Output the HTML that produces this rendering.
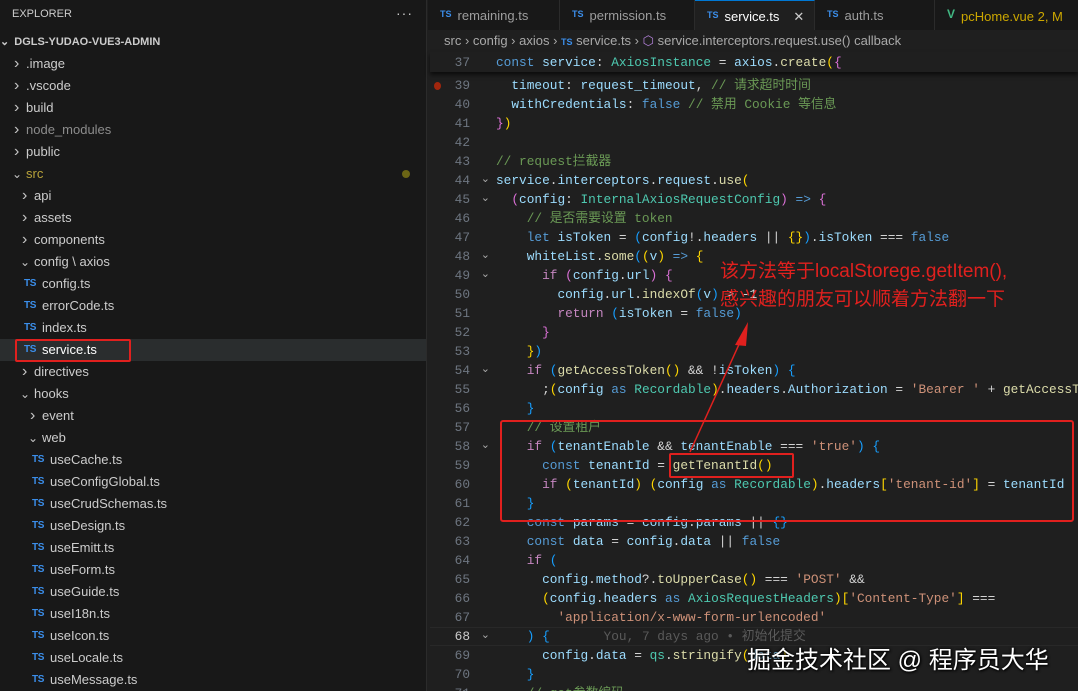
<!DOCTYPE html>
<html><head><meta charset="utf-8"><style>
*{margin:0;padding:0;box-sizing:border-box}
html,body{width:1078px;height:691px;overflow:hidden}
body{background:#1f1f1f;position:relative;font-family:"Liberation Sans","Noto Sans CJK SC",sans-serif;color:#ccc}
#side{position:absolute;left:0;top:0;width:427px;height:691px;background:#181818;border-right:1px solid #2b2b2b}
.it{position:absolute;height:22px;line-height:22px;font-size:13px;color:#ccc;white-space:nowrap}
.chev{position:absolute;top:0;font-size:12px;color:#c5c5c5}
.ts{position:absolute;top:0;font-size:10px;font-weight:bold;color:#3b8eea;letter-spacing:-.3px}
#tabs{position:absolute;left:428px;top:0;width:650px;height:30px;background:#181818}
.tab{position:absolute;top:0;height:30px;line-height:29px;font-size:13px;color:#9d9d9d;border-right:1px solid #2b2b2b;padding-left:12px;white-space:nowrap}
.tab b{font-size:9px;color:#3b8eea;margin-right:6px;vertical-align:3px}
#bc{position:absolute;left:444px;top:33px;font-size:13px;color:#a9a9a9;white-space:nowrap}
.code{position:absolute;left:496px;font-family:"Liberation Mono","Noto Sans CJK SC",monospace;font-size:12.8px;white-space:pre;color:#9cdcfe}
.ln{position:absolute;left:430px;width:40px;text-align:right;font-family:"Liberation Mono",monospace;font-size:12.8px;color:#6e7681}
.k{color:#569cd6}.v{color:#9cdcfe}.t{color:#4ec9b0}.f{color:#dcdcaa}.s{color:#ce9178}.c{color:#6a9955}.p{color:#c586c0}.w{color:#d4d4d4}.y{color:#ffd700}.m{color:#da70d6}.b{color:#179fff}
</style></head><body>
<div id="side">
<div class="it" style="left:12px;top:3px;font-size:11px">EXPLORER</div>
<div class="it" style="left:396px;top:2px;font-size:14px;letter-spacing:1px">···</div>
<div class="it" style="left:0;top:31px;font-size:11px;font-weight:bold">⌄ <span style="margin-left:2px">DGLS-YUDAO-VUE3-ADMIN</span></div>
<div style="position:absolute;left:0;top:339px;width:426px;height:22px;background:#2a2d2e"></div>
</div>
<div id="sidelist"></div>
<div style="position:absolute;left:15px;top:339px;width:116px;height:23px;border:2px solid #e0201e;border-radius:2px"></div>
<div style="position:absolute;left:402px;top:170px;width:8px;height:8px;border-radius:50%;background:#6b6515"></div>

<div id="tabs">
<div class="tab" style="left:0;width:132px"><b>TS</b>remaining.ts</div>
<div class="tab" style="left:132px;width:135px"><b>TS</b>permission.ts</div>
<div class="tab" style="left:267px;width:120px;background:#1f1f1f;color:#fff;border-top:1px solid #0078d4"><b>TS</b>service.ts<span style="margin-left:14px;color:#ccc">✕</span></div>
<div class="tab" style="left:387px;width:120px"><b>TS</b>auth.ts</div>
<div class="tab" style="left:507px;width:150px;color:#cca700"><b style="color:#41b883;font-size:12px">V</b>pcHome.vue 2, M</div>
</div>
<div id="bc">src › config › axios › <span style="color:#3b8eea;font-size:9px;font-weight:bold">TS</span> service.ts › <span style="color:#b180d7">⬡</span> service.interceptors.request.use() callback</div>

<div id="code"></div>
<div style="position:absolute;left:430px;top:52px;width:648px;height:20px;background:#1f1f1f;box-shadow:0 3px 4px rgba(0,0,0,.6)"></div>
<div class="ln" style="top:53px;line-height:19px">37</div>
<div class="code" style="top:53px;line-height:19px"><span class="k">const</span> <span class="v">service</span><span class="w">: </span><span class="t">AxiosInstance</span><span class="w"> = </span><span class="v">axios</span><span class="w">.</span><span class="f">create</span><span class="y">(</span><span class="m">{</span></div>
<div style="position:absolute;left:434px;top:82px;width:7px;height:8px;border-radius:50%;background:#a1260d"></div>

<div style="position:absolute;left:500px;top:420px;width:574px;height:102px;border:2px solid #e0201e;border-radius:3px"></div>
<div style="position:absolute;left:669px;top:453px;width:125px;height:25px;border:2px solid #e0201e;border-radius:2px"></div>
<svg style="position:absolute;left:0;top:0" width="1078" height="691"><line x1="690" y1="452" x2="741" y2="340" stroke="#e0201e" stroke-width="1.5"/><polygon points="748,322 735,345 746,346" fill="#e0201e"/></svg>
<div style="position:absolute;left:720px;top:258px;font-size:19px;color:#e0201e;white-space:nowrap;line-height:28px">该方法等于localStorege.getItem(),<br>感兴趣的朋友可以顺着方法翻一下</div>
<div style="position:absolute;left:747px;top:640px;font-size:24px;color:#fff;white-space:nowrap;text-shadow:1px 1px 2px #000,0 0 3px #000">掘金技术社区 @ 程序员大华</div>

<script>
var S=[
['chev',14,'›','.image',26,64],['chev',14,'›','.vscode',26,86],['chev',14,'›','build',26,108],['chev',14,'›','node_modules',26,130,'#8c8c8c'],['chev',14,'›','public',26,152],['chev',12,'⌄','src',26,174,'#b8a23a'],
['chev',22,'›','api',34,196],['chev',22,'›','assets',34,218],['chev',22,'›','components',34,240],['chev',20,'⌄','config \\ axios',34,262],
['ts',24,'TS','config.ts',42,284],['ts',24,'TS','errorCode.ts',42,306],['ts',24,'TS','index.ts',42,328],['ts',24,'TS','service.ts',42,350,'#fff'],
['chev',22,'›','directives',34,372],['chev',20,'⌄','hooks',34,394],['chev',30,'›','event',42,416],['chev',28,'⌄','web',42,438]];
var f=['useCache.ts','useConfigGlobal.ts','useCrudSchemas.ts','useDesign.ts','useEmitt.ts','useForm.ts','useGuide.ts','useI18n.ts','useIcon.ts','useLocale.ts','useMessage.ts'];
f.forEach(function(n,i){S.push(['ts',32,'TS',n,50,460+22*i])});
var h='';S.forEach(function(s){h+='<div class="'+s[0]+'" style="left:'+s[1]+'px;top:'+(s[5]-11+(s[0]=='ts'?5:0))+'px;line-height:'+(s[0]=='ts'?'12px':'22px')+(s[0]=='chev'&&s[2]=='›'?';font-size:16px':'')+'">'+s[2]+'</div><div class="it" style="left:'+s[4]+'px;top:'+(s[5]-11)+'px;color:'+(s[6]||'#ccc')+'">'+s[3]+'</div>'});
document.getElementById('sidelist').innerHTML=h;
function q(c,t){return '<span class="'+c+'">'+t+'</span>'}
var L=[
[39,'  '+q('v','timeout')+q('w',': ')+q('v','request_timeout')+q('w',', ')+q('c','// 请求超时时间')],
[40,'  '+q('v','withCredentials')+q('w',': ')+q('k','false')+' '+q('c','// 禁用 Cookie 等信息')],
[41,q('m','}')+q('y',')')],[42,''],
[43,q('c','// request拦截器')],
[44,q('v','service')+q('w','.')+q('v','interceptors')+q('w','.')+q('v','request')+q('w','.')+q('f','use')+q('y','('),1],
[45,'  '+q('m','(')+q('v','config')+q('w',': ')+q('t','InternalAxiosRequestConfig')+q('m',')')+q('k',' =>')+' '+q('m','{'),1],
[46,'    '+q('c','// 是否需要设置 token')],
[47,'    '+q('k','let')+' '+q('v','isToken')+q('w',' = ')+q('b','(')+q('v','config')+q('w','!.')+q('v','headers')+q('w',' || ')+q('y','{}')+q('b',')')+q('w','.')+q('v','isToken')+q('w',' === ')+q('k','false')],
[48,'    '+q('v','whiteList')+q('w','.')+q('f','some')+q('b','(')+q('y','(')+q('v','v')+q('y',')')+q('k',' =>')+' '+q('y','{'),1],
[49,'      '+q('p','if')+' '+q('m','(')+q('v','config')+q('w','.')+q('v','url')+q('m',')')+' '+q('m','{'),1],
[50,'        '+q('v','config')+q('w','.')+q('v','url')+q('w','.')+q('f','indexOf')+q('b','(')+q('v','v')+q('b',')')+q('w',' > -1')],
[51,'        '+q('p','return')+' '+q('b','(')+q('v','isToken')+q('w',' = ')+q('k','false')+q('b',')')],
[52,'      '+q('m','}')],[53,'    '+q('y','}')+q('b',')')],
[54,'    '+q('p','if')+' '+q('b','(')+q('f','getAccessToken')+q('y','()')+q('w',' && !')+q('v','isToken')+q('b',')')+' '+q('b','{'),1],
[55,'      '+q('w',';')+q('y','(')+q('v','config')+' '+q('k','as')+' '+q('t','Recordable')+q('y',')')+q('w','.')+q('v','headers')+q('w','.')+q('v','Authorization')+q('w',' = ')+q('s',"'Bearer '")+q('w',' + ')+q('f','getAccessToken')],
[56,'    '+q('b','}')],
[57,'    '+q('c','// 设置租户')],
[58,'    '+q('p','if')+' '+q('b','(')+q('v','tenantEnable')+q('w',' && ')+q('v','tenantEnable')+q('w',' === ')+q('s',"'true'")+q('b',')')+' '+q('b','{'),1],
[59,'      '+q('k','const')+' '+q('v','tenantId')+q('w',' = ')+q('f','getTenantId')+q('y','()')],
[60,'      '+q('p','if')+' '+q('y','(')+q('v','tenantId')+q('y',')')+' '+q('y','(')+q('v','config')+' '+q('k','as')+' '+q('t','Recordable')+q('y',')')+q('w','.')+q('v','headers')+q('y','[')+q('s',"'tenant-id'")+q('y',']')+q('w',' = ')+q('v','tenantId')],
[61,'    '+q('b','}')],
[62,'    '+q('k','const')+' '+q('v','params')+q('w',' = ')+q('v','config')+q('w','.')+q('v','params')+q('w',' || ')+q('b','{}')],
[63,'    '+q('k','const')+' '+q('v','data')+q('w',' = ')+q('v','config')+q('w','.')+q('v','data')+q('w',' || ')+q('k','false')],
[64,'    '+q('p','if')+' '+q('b','(')],
[65,'      '+q('v','config')+q('w','.')+q('v','method')+q('w','?.')+q('f','toUpperCase')+q('y','()')+q('w',' === ')+q('s',"'POST'")+q('w',' &&')],
[66,'      '+q('y','(')+q('v','config')+q('w','.')+q('v','headers')+' '+q('k','as')+' '+q('t','AxiosRequestHeaders')+q('y',')')+q('y','[')+q('s',"'Content-Type'")+q('y',']')+q('w',' ===')],
[67,'        '+q('s',"'application/x-www-form-urlencoded'")],
[68,'    '+q('b',')')+' '+q('b','{')+'       '+q('w" style="color:#5a5a5a','You, 7 days ago • 初始化提交'),1],
[69,'      '+q('v','config')+q('w','.')+q('v','data')+q('w',' = ')+q('t','qs')+q('w','.')+q('f','stringify')+q('y','(')+q('v','data')+q('y',')')],
[70,'    '+q('b','}')],
[71,'    '+q('c','// get参数编码')]];
var c='';L.forEach(function(l){var top=76+(l[0]-39)*19;
if(l[0]==68)c+='<div style="position:absolute;left:430px;top:'+top+'px;width:648px;height:19px;border-top:1px solid #282828;border-bottom:1px solid #282828"></div>';
c+='<div class="ln" style="top:'+top+'px;line-height:19px;'+(l[0]==68?'color:#ccc':'')+'">'+l[0]+'</div>';
if(l[2])c+='<div class="ln" style="left:478px;width:12px;top:'+top+'px;line-height:19px;color:#aaa;font-size:11px">⌄</div>';
c+='<div class="code" style="top:'+top+'px;line-height:19px">'+l[1]+'</div>'});
document.getElementById('code').innerHTML=c;
</script>
</body></html>
